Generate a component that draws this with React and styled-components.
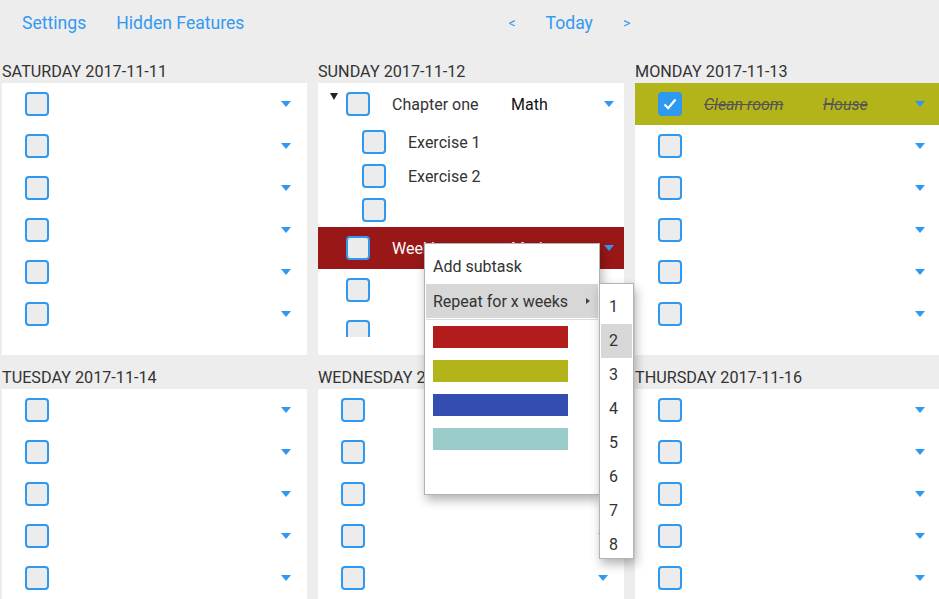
import React from "react";
import styled, { createGlobalStyle } from "styled-components";

const GlobalStyle = createGlobalStyle`
  html, body {
    margin: 0;
    padding: 0;
    background: #ededed;
    overflow: hidden;
    font-family: Roboto, "Liberation Sans", sans-serif;
    color: #333;
  }
`;

const Page = styled.div`
  position: relative;
  width: 939px;
  height: 599px;
  overflow: hidden;
`;

const Nav = styled.div`
  display: flex;
  align-items: center;
  height: 46px;
  padding: 0 0 3px 22px;
  gap: 30px;
  font-size: 17.6px;
  color: #339af0;
`;

const NavCenter = styled.div`
  display: flex;
  align-items: center;
  gap: 30px;
  margin-left: 234px;
`;

const Arrow = styled.span`
  font-size: 14px;
`;

const Grid = styled.div`
  display: grid;
  grid-template-columns: 305px 306px 306px;
  column-gap: 11px;
  padding-left: 2px;
`;

const Column = styled.div`
  display: flex;
  flex-direction: column;
`;

const DayHeader = styled.div`
  height: 24px;
  padding-top: 10px;
  line-height: 25px;
  font-size: 16.2px;
  color: #333;
  white-space: nowrap;
`;

const Card = styled.div`
  background: #fff;
  padding-bottom: 18px;
`;

const List = styled.div`
  height: 254px;
  overflow: hidden;
`;

const Row = styled.div`
  display: flex;
  align-items: center;
  height: ${({ $sub }) => ($sub ? 34 : 42)}px;
  padding-left: ${({ $indent }) => $indent}px;
  background: ${({ $bg }) => $bg || "transparent"};
  color: ${({ $fg }) => $fg || "#333"};
`;

const Toggle = styled.div`
  width: 16px;
  align-self: flex-start;
  padding-top: 10px;
  height: 32px;
  box-sizing: border-box;

  &::before {
    content: "";
    display: ${({ $open }) => ($open ? "block" : "none")};
    width: 0;
    height: 0;
    border-left: 4px solid transparent;
    border-right: 4px solid transparent;
    border-top: 7px solid #222;
  }
`;

const Box = styled.div`
  flex: none;
  width: 20px;
  height: 20px;
  border: 2px solid #2f98f0;
  border-radius: 4px;
  background: ${({ $checked }) => ($checked ? "#2f98f0" : "#ececec")};
  display: flex;
  align-items: center;
  justify-content: center;
`;

const Name = styled.div`
  width: 119px;
  margin-left: 22px;
  font-size: 16px;
  white-space: nowrap;
  ${({ $done }) =>
    $done && "font-style: italic; text-decoration: line-through; color: #555;"}
`;

const Category = styled(Name)`
  width: auto;
  margin-left: 0;
  color: ${({ $light }) => ($light ? "#fff" : "#111")};
  ${({ $done }) => $done && "color: #555;"}
`;

const Caret = styled.div`
  margin-left: auto;
  margin-right: ${({ $right }) => $right}px;
  width: 0;
  height: 0;
  border-left: 5px solid transparent;
  border-right: 5px solid transparent;
  border-top: 6px solid #2f98f0;
`;

const Menu = styled.div`
  position: absolute;
  left: 424px;
  top: 243px;
  width: 174px;
  height: 245px;
  padding-top: 5px;
  background: #fff;
  border: 1px solid #b3b3b3;
  box-shadow: 2px 5px 10px rgba(0, 0, 0, 0.3);
  font-size: 16px;
  color: #333;
  z-index: 5;
`;

const MenuItem = styled.div`
  display: flex;
  align-items: center;
  height: ${({ $h }) => $h || 34}px;
  margin: 0 1px;
  padding: 0 8px 0 7px;
  background: ${({ $active }) => ($active ? "#d7d7d7" : "transparent")};
`;

const SubArrow = styled.div`
  margin-left: auto;
  width: 0;
  height: 0;
  border-top: 3px solid transparent;
  border-bottom: 3px solid transparent;
  border-left: 4px solid #444;
`;

const Separator = styled.div`
  height: 1px;
  margin: 1px 1px 0;
  background: #dcdcdc;
`;

const Swatch = styled.div`
  height: 34px;
  display: flex;
  align-items: center;
  padding-left: 8px;

  &::before {
    content: "";
    width: 135px;
    height: 22px;
    background: ${({ $color }) => $color};
  }
`;

const SubMenu = styled.div`
  position: absolute;
  left: 599px;
  top: 283px;
  width: 33px;
  height: 268px;
  padding-top: 6px;
  background: #fff;
  border: 1px solid #b3b3b3;
  box-shadow: 2px 5px 10px rgba(0, 0, 0, 0.3);
  font-size: 16px;
  color: #333;
  z-index: 6;
`;

const SubItem = styled.div`
  height: 34px;
  line-height: 34px;
  margin: 0 1px;
  padding-left: 8px;
  background: ${({ $active }) => ($active ? "#d7d7d7" : "transparent")};
`;

const Check = () => (
  <svg width="18" height="18" viewBox="0 0 18 18">
    <path d="M3.5 9.5 L7.2 13.2 L14.5 4.5" fill="none" stroke="#fff" strokeWidth="2.2" />
  </svg>
);

const emptyRows = (n) => Array.from({ length: n }, () => ({}));

const Task = ({ task, indent, right, toggle }) => (
  <Row $sub={task.sub} $indent={indent + (task.sub ? 16 : 0)} $bg={task.bg}>
    {toggle && <Toggle $open={task.open} />}
    <Box $checked={task.done}>{task.done && <Check />}</Box>
    {task.name && (
      <Name $done={task.done} style={task.light ? { color: "#fff" } : undefined}>
        {task.name}
      </Name>
    )}
    {task.cat && (
      <Category $done={task.done} $light={task.light}>
        {task.cat}
      </Category>
    )}
    {!task.sub && <Caret $right={right} />}
  </Row>
);

const Day = ({ label, tasks, toggle = false, right = 16 }) => (
  <Column>
    <DayHeader>{label}</DayHeader>
    <Card>
      <List>
        {tasks.map((t, i) => (
          <Task key={i} task={t} indent={toggle ? 12 : 23} right={right} toggle={toggle} />
        ))}
      </List>
    </Card>
  </Column>
);

const sunday = [
  { name: "Chapter one", cat: "Math", open: true },
  { name: "Exercise 1", sub: true },
  { name: "Exercise 2", sub: true },
  { sub: true },
  { name: "Weekly", cat: "Math", bg: "#991717", light: true },
  {},
  {},
];

const monday = [
  { name: "Clean room", cat: "House", done: true, bg: "#b3b31a" },
  ...emptyRows(5),
];

export default function App() {
  return (
    <Page>
      <GlobalStyle />
      <Nav>
        <span>Settings</span>
        <span>Hidden Features</span>
        <NavCenter>
          <Arrow>&lt;</Arrow>
          <span>Today</span>
          <Arrow>&gt;</Arrow>
        </NavCenter>
      </Nav>

      <Grid>
        <Day label="SATURDAY 2017-11-11" tasks={emptyRows(6)} />
        <Day label="SUNDAY 2017-11-12" tasks={sunday} toggle right={10} />
        <Day label="MONDAY 2017-11-13" tasks={monday} />
        <Day label="TUESDAY 2017-11-14" tasks={emptyRows(6)} />
        <Day label="WEDNESDAY 2017-11-15" tasks={emptyRows(6)} />
        <Day label="THURSDAY 2017-11-16" tasks={emptyRows(6)} />
      </Grid>

      <Menu>
        <MenuItem $h={35}>Add subtask</MenuItem>
        <MenuItem $active>
          Repeat for x weeks
          <SubArrow />
        </MenuItem>
        <Separator />
        <Swatch $color="#b21c1c" />
        <Swatch $color="#b3b31a" />
        <Swatch $color="#344db0" />
        <Swatch $color="#9acccc" />
      </Menu>

      <SubMenu>
        {[1, 2, 3, 4, 5, 6, 7, 8].map((n) => (
          <SubItem key={n} $active={n === 2}>
            {n}
          </SubItem>
        ))}
      </SubMenu>
    </Page>
  );
}
